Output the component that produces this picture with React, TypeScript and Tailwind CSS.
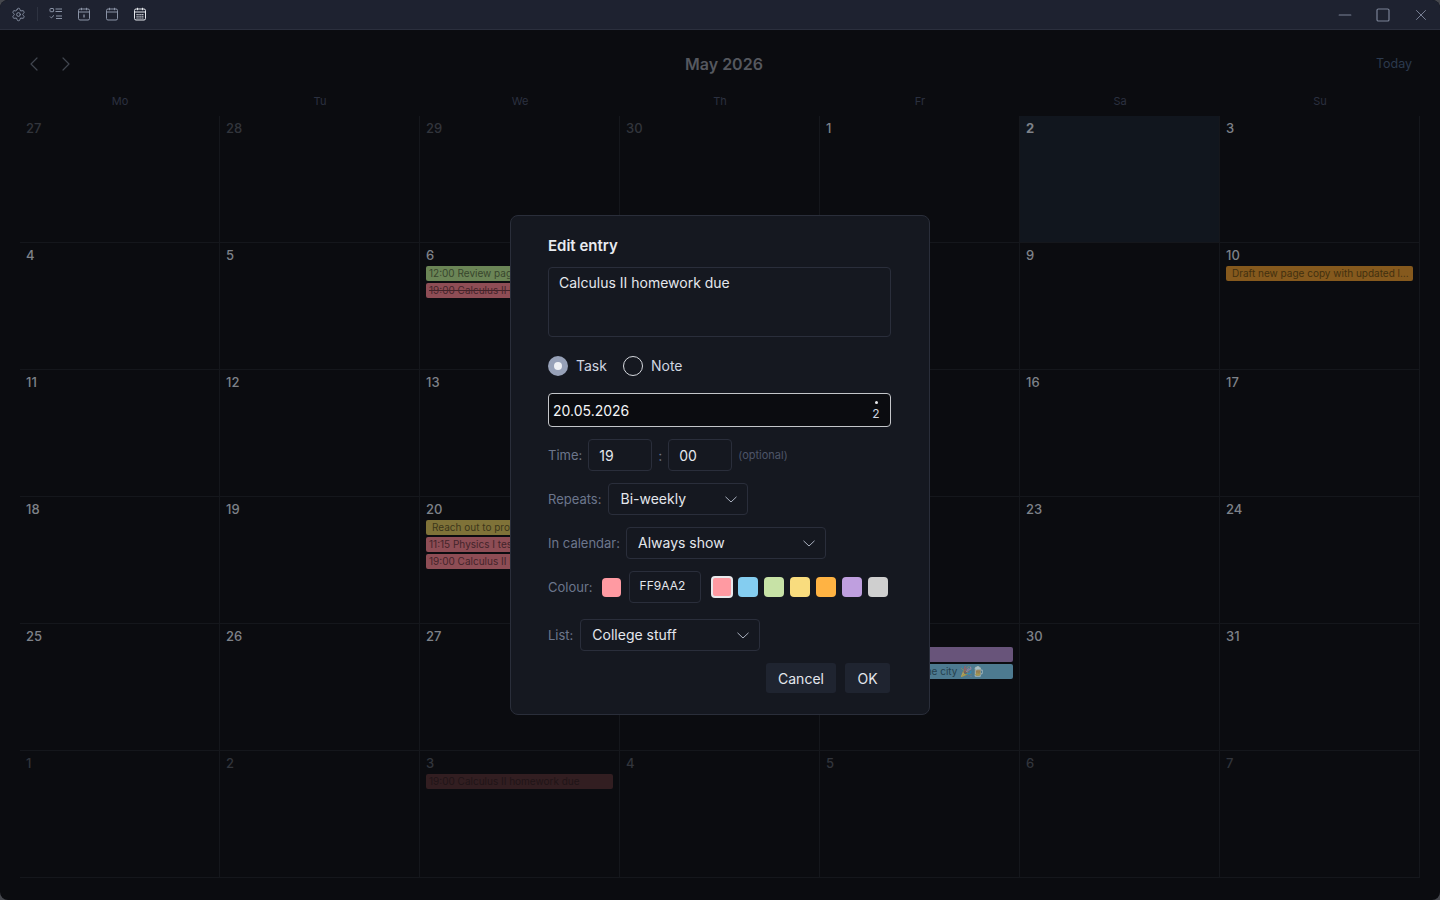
import { Settings, Minus, Square, X, ChevronLeft, ChevronRight } from "lucide-react";

type Chip = { text: string; cls: string; strike?: boolean; inset?: boolean; emoji?: string };
type Day = { n: number; dim?: boolean; today?: boolean; chips?: Chip[] };

const green = "bg-[#6b8556] text-[#38462d]";
const red = "bg-[#8e4d55] text-[#43242a]";
const yellow = "bg-[#7f7238] text-[#3c361a]";
const orange = "bg-[#85591d] text-[#42300f]";
const purple = "bg-[#68547a] text-[#342a3d]";
const blue = "bg-[#4d7a90] text-[#25414e]";
const faded = "bg-[#321e21] text-[#201417]";

const weekdays = ["Mo", "Tu", "We", "Th", "Fr", "Sa", "Su"];

const d = (n: number, chips?: Chip[]): Day => ({ n, chips });
const o = (n: number, chips?: Chip[]): Day => ({ n, dim: true, chips });

const days: Day[] = [
  o(27), o(28), o(29), o(30), d(1), { n: 2, today: true }, d(3),
  d(4), d(5),
  d(6, [
    { text: "12:00 Review page layout", cls: green },
    { text: "19:00 Calculus II homework due", cls: red, strike: true },
  ]),
  d(7), d(8), d(9),
  d(10, [{ text: "Draft new page copy with updated links for the site", cls: orange, inset: true }]),
  d(11), d(12), d(13), d(14), d(15), d(16), d(17),
  d(18), d(19),
  d(20, [
    { text: "Reach out to professor", cls: yellow, inset: true },
    { text: "11:15 Physics I test", cls: red },
    { text: "19:00 Calculus II homework due", cls: red },
  ]),
  d(21), d(22), d(23), d(24),
  d(25), d(26), d(27), d(28),
  d(29, [
    { text: "", cls: purple },
    { text: "Drinks with Sam in the city ", emoji: "🎉🍺", cls: blue, inset: true },
  ]),
  d(30), d(31),
  o(1), o(2),
  o(3, [{ text: "19:00 Calculus II homework due", cls: faded }]),
  o(4), o(5), o(6), o(7),
];

const swatches = ["bg-[#84cdf0]", "bg-[#c7e2a6]", "bg-[#f9dc7e]", "bg-[#ffb343]", "bg-[#bf9fdf]", "bg-[#cfcfcf]"];

function CalendarIcon({ kind, className }: { kind: "day" | "week" | "month"; className: string }) {
  return (
    <svg viewBox="0 0 14 14" fill="none" stroke="currentColor" strokeWidth="1" className={className}>
      <rect x="1.5" y="2" width="11" height="11" rx="1.5" />
      <path d="M1.5 5h11M4.5 .8v2.4M9.5 .8v2.4" />
      {kind === "day" && <path d="M7 7.5v3" strokeWidth="1.3" />}
      {kind === "month" && <path d="M3.5 7.5h7M3.5 9.3h7M3.5 11h7" strokeWidth="1.1" strokeDasharray="1.2 .7" />}
    </svg>
  );
}

function ListIcon() {
  return (
    <svg viewBox="0 0 14 14" fill="none" stroke="currentColor" className="w-[14px] h-[14px] text-[#8a93a6]">
      <rect x="1" y="1.5" width="3.6" height="3.2" rx=".6" />
      <path d="M1 9.5l1.4 1.4L5 8.3" />
      <path d="M6.5 2h6.5M6.5 4.5h6.5M7 9h6M7 11.5h6" strokeWidth="1.2" />
    </svg>
  );
}

function Chevron() {
  return (
    <svg viewBox="0 0 12 7" fill="none" stroke="currentColor" className="w-[12px] h-[7px] text-[#aab1bf]">
      <path d="M.5 .8L6 6l5.5-5.2" />
    </svg>
  );
}

function Select({ value, className }: { value: string; className: string }) {
  return (
    <div className={`h-[32px] flex items-center justify-between pl-[11px] pr-[10px] border border-[#2a2e3b] rounded-[4px] text-[14px] text-[#e4e7ed] ${className}`}>
      <span className="pb-px">{value}</span>
      <Chevron />
    </div>
  );
}

function Label({ children }: { children: string }) {
  return <span className="pt-px text-[13px] text-[#6c768c]">{children}</span>;
}

function DayCell({ day }: { day: Day }) {
  return (
    <div className={`min-w-0 pl-[6px] pr-[6px] pt-[2px] border-r border-b border-[#15171c] ${day.today ? "bg-[#11161e]" : ""}`}>
      <div
        className={`h-[20px] leading-[20px] text-[13px] ${day.dim ? "text-[#32353c]" : "text-[#7e8289]"} ${day.today ? "font-bold" : "font-medium"}`}
      >
        {day.n}
      </div>
      <div className="mt-px flex flex-col gap-[2px]">
        {day.chips?.map((chip, i) => (
          <div
            key={i}
            className={`h-[15px] leading-[15px] rounded-[2px] text-[10px] truncate ${chip.inset ? "pl-[6px]" : "pl-[3px]"} pr-[3px] ${chip.cls} ${chip.strike ? "line-through" : ""}`}
          >
            {chip.text}
            {chip.emoji && <span className="opacity-50">{chip.emoji}</span>}
          </div>
        ))}
      </div>
    </div>
  );
}

function EditDialog() {
  return (
    <div className="absolute inset-0 flex items-center justify-center">
      <div className="w-[420px] h-[500px] bg-[#151820] border border-[#2a2e3a] rounded-[8px] pl-[37px] pr-[38px] pt-[20px]">
        <div className="h-[20px] leading-[20px] text-[15px] font-semibold text-[#e8ebf0]">Edit entry</div>

        <div className="mt-[11px] h-[70px] border border-[#2a2e3b] rounded-[4px] pl-[10px] pt-[6px] text-[14px] leading-[18px] text-[#e4e7ed]">
          Calculus II homework due
        </div>

        <div className="mt-[19px] h-[20px] flex items-center text-[14px] text-[#cfd5e0]">
          <span className="w-[20px] h-[20px] rounded-full bg-[#97a1b8] flex items-center justify-center">
            <span className="w-[8px] h-[8px] rounded-full bg-[#eef0f4]" />
          </span>
          <span className="ml-[8px] pb-px">Task</span>
          <span className="ml-[16px] w-[20px] h-[20px] rounded-full border border-[#d5d8de]" />
          <span className="ml-[8px] pb-px">Note</span>
        </div>

        <div className="mt-[17px] h-[34px] bg-[#0b0c10] border border-[#c4c6ca] rounded-[4px] pl-[4px] pr-[9px] flex items-center justify-between text-[14px] text-[#f4f5f7]">
          <span className="pt-px">20.05.2026</span>
          <span className="flex flex-col items-center w-[10px]">
            <span className="w-[3px] h-[3px] rounded-full bg-[#e6e8ec]" />
            <span className="mt-[3px] text-[12px] leading-[13px] text-[#cfd5e0]">2</span>
          </span>
        </div>

        <div className="mt-[12px] h-[32px] flex items-center">
          <Label>Time:</Label>
          <div className="ml-[6px] w-[64px] h-[32px] border border-[#2a2e3b] rounded-[4px] pl-[10px] flex items-center text-[14px] text-[#e4e7ed]">19</div>
          <span className="w-[16px] text-center text-[14px] text-[#6c768c]">:</span>
          <div className="w-[64px] h-[32px] border border-[#2a2e3b] rounded-[4px] pl-[10px] flex items-center text-[14px] text-[#e4e7ed]">00</div>
          <span className="ml-[6px] text-[11px] text-[#4d5568]">(optional)</span>
        </div>

        <div className="mt-[12px] flex items-center gap-[7px]">
          <Label>Repeats:</Label>
          <Select value="Bi-weekly" className="w-[140px]" />
        </div>

        <div className="mt-[12px] flex items-center gap-[6px]">
          <Label>In calendar:</Label>
          <Select value="Always show" className="w-[200px]" />
        </div>

        <div className="mt-[12px] h-[32px] flex items-center">
          <Label>Colour:</Label>
          <span className="ml-[9px] w-[19px] h-[19px] rounded-[4px] bg-[#ff9aa2]" />
          <div className="ml-[8px] w-[72px] h-[32px] border border-[#2a2e3b] rounded-[4px] pl-[10px] pb-[3px] flex items-center text-[12px] text-[#e4e7ed]">FF9AA2</div>
          <span className="ml-[10px] w-[22px] h-[22px] rounded-[4px] bg-[#ff9aa2] border-2 border-[#e8e9ec]" />
          <div className="ml-[5px] flex gap-[6px]">
            {swatches.map((s) => (
              <span key={s} className={`w-[20px] h-[20px] rounded-[4px] ${s}`} />
            ))}
          </div>
        </div>

        <div className="mt-[16px] flex items-center gap-[7px]">
          <Label>List:</Label>
          <Select value="College stuff" className="w-[180px]" />
        </div>

        <div className="mt-[12px] mr-px flex justify-end gap-[9px] text-[14px] text-[#e4e7ed]">
          <div className="w-[70px] h-[30px] rounded-[3px] bg-[#1f2430] flex items-center justify-center">Cancel</div>
          <div className="w-[45px] h-[30px] rounded-[3px] bg-[#1f2430] flex items-center justify-center">OK</div>
        </div>
      </div>
    </div>
  );
}

export default function App() {
  return (
    <div className="h-screen w-full bg-[#45474d] font-[family-name:Inter,sans-serif]">
      <div className="h-full flex flex-col rounded-[8px] overflow-hidden bg-[#0b0c10]">
        {/* Title bar */}
        <div className="h-[30px] shrink-0 bg-[#1e2230] border-b border-[#2b2f3d] flex items-center pl-[11px] pr-[10px]">
          <div className="flex items-center pb-px">
            <Settings className="w-[15px] h-[15px] text-[#8a93a6]" strokeWidth={1.5} />
            <span className="ml-[11px] w-px h-[14px] bg-[#2e3341]" />
            <div className="ml-[11px] flex items-center gap-[14px]">
              <ListIcon />
              <CalendarIcon kind="day" className="w-[14px] h-[14px] text-[#8a93a6]" />
              <CalendarIcon kind="week" className="w-[14px] h-[14px] text-[#8a93a6]" />
              <CalendarIcon kind="month" className="w-[14px] h-[14px] text-[#e4e7ec]" />
            </div>
          </div>
          <div className="ml-auto flex items-center text-[#7a8296] pt-px">
            <Minus className="w-[20px] h-[20px]" strokeWidth={1.4} />
            <Square className="ml-[20px] w-[16px] h-[16px]" strokeWidth={1.8} />
            <X className="ml-[21px] w-[18px] h-[18px]" strokeWidth={1.3} />
          </div>
        </div>

        {/* Calendar */}
        <div className="relative flex-1 min-h-0">
          <div className="h-[62px] pt-[6px] pl-[22px] pr-[28px] flex items-center justify-between">
            <div className="flex items-center gap-[8px] -mr-[6px] text-[#41464f]">
              <ChevronLeft className="w-[24px] h-[24px]" strokeWidth={1.2} />
              <ChevronRight className="w-[24px] h-[24px]" strokeWidth={1.2} />
            </div>
            <div className="text-[16px] font-semibold text-[#55585f]">May 2026</div>
            <div className="text-[12.5px] text-[#2c3a4e]">Today</div>
          </div>

          <div className="mx-[20px] mb-[6px] grid grid-cols-7 h-[18px] items-center text-center text-[11px] text-[#2c3140]">
            {weekdays.map((w) => (
              <div key={w}>{w}</div>
            ))}
          </div>

          <div className="mx-[20px] grid grid-cols-7 grid-rows-6 h-[762px]">
            {days.map((day, i) => (
              <DayCell key={i} day={day} />
            ))}
          </div>

          <EditDialog />
        </div>
      </div>
    </div>
  );
}
